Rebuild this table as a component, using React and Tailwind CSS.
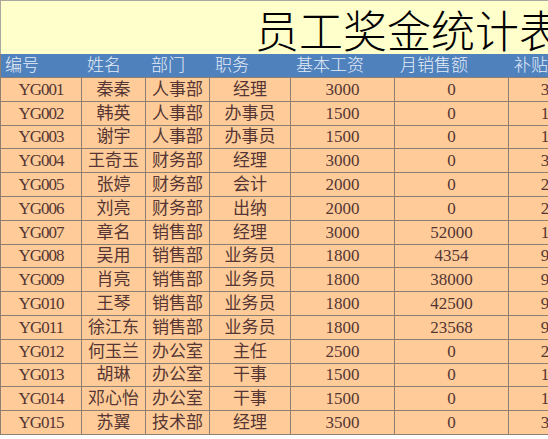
import React from 'react'

const rows = [
  ['YG001', '秦秦', '人事部', '经理', '3000', '0', '300'],
  ['YG002', '韩英', '人事部', '办事员', '1500', '0', '150'],
  ['YG003', '谢宇', '人事部', '办事员', '1500', '0', '150'],
  ['YG004', '王奇玉', '财务部', '经理', '3000', '0', '300'],
  ['YG005', '张婷', '财务部', '会计', '2000', '0', '200'],
  ['YG006', '刘亮', '财务部', '出纳', '2000', '0', '200'],
  ['YG007', '章名', '销售部', '经理', '3000', '52000', '100'],
  ['YG008', '吴用', '销售部', '业务员', '1800', '4354', '900'],
  ['YG009', '肖亮', '销售部', '业务员', '1800', '38000', '900'],
  ['YG010', '王琴', '销售部', '业务员', '1800', '42500', '900'],
  ['YG011', '徐江东', '销售部', '业务员', '1800', '23568', '900'],
  ['YG012', '何玉兰', '办公室', '主任', '2500', '0', '250'],
  ['YG013', '胡琳', '办公室', '干事', '1500', '0', '150'],
  ['YG014', '邓心怡', '办公室', '干事', '1500', '0', '150'],
  ['YG015', '苏翼', '技术部', '经理', '3500', '0', '350'],
]

const headers = ['编号', '姓名', '部门', '职务', '基本工资', '月销售额', '补贴']

const font = { fontFamily: '"Liberation Serif", "Noto Sans CJK SC", serif' }

export default function App() {
  return (
    <div className="w-[548px] h-[439px] overflow-hidden bg-white" style={font}>
      <div className="w-[600px]">
        {/* title band */}
        <div className="h-[54px] bg-[#ffffcc] border-t border-l border-[#a8a8a0] flex items-center pl-[254px] overflow-hidden">
          <span className="text-[44px] leading-[44px] font-light text-black whitespace-nowrap pt-[2px]" style={{ fontFamily: '"Noto Sans CJK SC", serif' }}>
            员工奖金统计表
          </span>
        </div>

        {/* header */}
        <div className="grid grid-cols-[82px_64px_64px_81px_104px_114px_90px] h-[24px] bg-[#4f81bd] border-b border-l border-[#8e7f70]">
          {headers.map((h) => (
            <div key={h} className="pl-[4px] flex items-center text-[17px] leading-none font-light text-[#e4ecf7] whitespace-nowrap">
              {h}
            </div>
          ))}
        </div>

        {/* rows */}
        {rows.map((r) => (
          <div key={r[0]} className="grid grid-cols-[82px_64px_64px_81px_104px_114px_90px] h-[23.8px] bg-[#ffcc99]">
            {r.map((c, i) => (
              <div
                key={i}
                className={
                  'flex items-center justify-center border-b border-r border-[#8e7f70] text-[17px] leading-none text-[#553634] whitespace-nowrap ' +
                  (i === 0 ? 'border-l text-[16px] tracking-[-1px]' : '')
                }
              >
                {c}
              </div>
            ))}
          </div>
        ))}
      </div>
    </div>
  )
}
